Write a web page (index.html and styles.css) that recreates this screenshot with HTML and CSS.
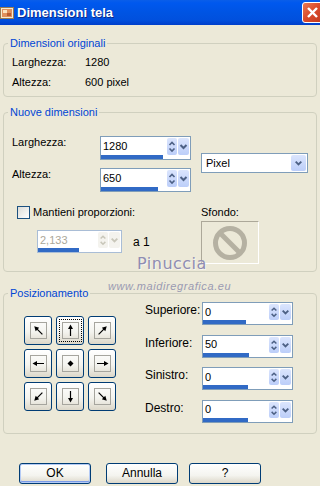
FILE: index.html
```html
<!DOCTYPE html>
<html lang="it">
<head>
    <meta charset="UTF-8">
    <meta name="viewport" content="width=device-width, initial-scale=1.0">
    <title>Dimensioni tela</title>
    <link rel="stylesheet" href="styles.css">
</head>

<body>
    <!-- simboli riutilizzati -->
    <svg class="simboli" width="0" height="0">
        <symbol id="su-giu" viewBox="0 0 10 17">
            <polyline points="2.5,7 5,4.5 7.5,7" fill="none" stroke="currentColor" stroke-width="1.6"/>
            <polyline points="2.5,10.5 5,13 7.5,10.5" fill="none" stroke="currentColor" stroke-width="1.6"/>
        </symbol>
        <symbol id="giu" viewBox="0 0 11 17">
            <polyline points="2.5,7 5.5,10 8.5,7" fill="none" stroke="currentColor" stroke-width="2"/>
        </symbol>
        <symbol id="freccia" viewBox="0 0 15 15">
            <line x1="7.5" y1="13" x2="7.5" y2="4.5" stroke="#000" stroke-width="1.2"/>
            <polygon points="7.5,1.5 5,6 10,6" fill="#000"/>
        </symbol>
    </svg>

    <div id="finestra">
        <!-- barra del titolo -->
        <div class="titolo">
            <svg class="icona" width="14" height="14" viewBox="0 0 14 14">
                <rect x="0.5" y="1.5" width="13" height="11" fill="#f6ead0" stroke="#9a7a50"/>
                <rect x="2" y="3" width="10" height="8" fill="#e0905c"/>
                <rect x="3" y="4" width="4" height="3" fill="#fbe3c0"/>
                <rect x="7" y="7" width="4" height="3" fill="#b85c30"/>
            </svg>
            <span class="titolo-testo">Dimensioni tela</span>
            <div class="chiudi">
                <svg width="19" height="19" viewBox="0 0 19 19">
                    <line x1="5" y1="5" x2="14" y2="14" stroke="#fff" stroke-width="2.4"/>
                    <line x1="14" y1="5" x2="5" y2="14" stroke="#fff" stroke-width="2.4"/>
                </svg>
            </div>
        </div>

        <div class="contenuto">
            <!-- dimensioni originali -->
            <fieldset class="gruppo gruppo-orig">
                <legend>Dimensioni originali</legend>
                <div class="info">
                    <span>Larghezza:</span><span>1280</span>
                    <span>Altezza:</span><span>600 pixel</span>
                </div>
            </fieldset>

            <!-- nuove dimensioni -->
            <fieldset class="gruppo gruppo-nuove">
                <legend>Nuove dimensioni</legend>
                <div class="nuove">
                    <div class="nuove-sx">
                        <div class="riga-dim">
                            <span class="etichetta">Larghezza:</span>
                            <div class="spin">
                                <div class="spin-riga">
                                    <span class="spin-valore">1280</span>
                                    <span class="spin-su-giu"><svg><use href="#su-giu"/></svg></span>
                                    <span class="spin-menu"><svg><use href="#giu"/></svg></span>
                                </div>
                                <div class="spin-barra"><div class="spin-pieno" style="width: 70%"></div></div>
                            </div>
                        </div>
                        <div class="riga-dim seconda">
                            <span class="etichetta">Altezza:</span>
                            <div class="spin">
                                <div class="spin-riga">
                                    <span class="spin-valore">650</span>
                                    <span class="spin-su-giu"><svg><use href="#su-giu"/></svg></span>
                                    <span class="spin-menu"><svg><use href="#giu"/></svg></span>
                                </div>
                                <div class="spin-barra"><div class="spin-pieno" style="width: 64%"></div></div>
                            </div>
                        </div>
                        <div class="riga-check">
                            <span class="casella"></span>
                            <span>Mantieni proporzioni:</span>
                        </div>
                        <div class="riga-rapporto">
                            <div class="spin bassa spento">
                                <div class="spin-riga">
                                    <span class="spin-valore">2,133</span>
                                    <span class="spin-su-giu"><svg><use href="#su-giu"/></svg></span>
                                    <span class="spin-menu"><svg><use href="#giu"/></svg></span>
                                </div>
                                <div class="spin-barra"><div class="spin-pieno" style="width: 49%"></div></div>
                            </div>
                            <span class="a-uno">a 1</span>
                        </div>
                    </div>

                    <div class="nuove-dx">
                        <div class="selezione">
                            <span class="selezione-testo">Pixel</span>
                            <span class="selezione-btn"><svg><use href="#giu"/></svg></span>
                        </div>
                        <div class="sfondo-label">Sfondo:</div>
                        <div class="sfondo">
                            <svg width="36" height="36" viewBox="0 0 36 36">
                                <circle cx="18" cy="18" r="14.5" fill="none" stroke="#b5b1a2" stroke-width="5"/>
                                <line x1="8" y1="8" x2="28" y2="28" stroke="#b5b1a2" stroke-width="5"/>
                            </svg>
                        </div>
                    </div>
                </div>
            </fieldset>

            <!-- posizionamento -->
            <fieldset class="gruppo gruppo-pos">
                <legend>Posizionamento</legend>
                <div class="pos">
                    <div class="pos-griglia">
                        <div class="pos-btn"><span class="quadro"><svg viewBox="0 0 15 15"><use href="#freccia" transform="rotate(-45 7.5 7.5)"/></svg></span></div>
                        <div class="pos-btn attivo"><span class="quadro"><svg viewBox="0 0 15 15"><use href="#freccia"/></svg></span></div>
                        <div class="pos-btn"><span class="quadro"><svg viewBox="0 0 15 15"><use href="#freccia" transform="rotate(45 7.5 7.5)"/></svg></span></div>
                        <div class="pos-btn"><span class="quadro"><svg viewBox="0 0 15 15"><use href="#freccia" transform="rotate(-90 7.5 7.5)"/></svg></span></div>
                        <div class="pos-btn"><span class="quadro"><svg viewBox="0 0 15 15"><polygon points="7.5,4.5 10.5,7.5 7.5,10.5 4.5,7.5" fill="#000"/></svg></span></div>
                        <div class="pos-btn"><span class="quadro"><svg viewBox="0 0 15 15"><use href="#freccia" transform="rotate(90 7.5 7.5)"/></svg></span></div>
                        <div class="pos-btn"><span class="quadro"><svg viewBox="0 0 15 15"><use href="#freccia" transform="rotate(-135 7.5 7.5)"/></svg></span></div>
                        <div class="pos-btn"><span class="quadro"><svg viewBox="0 0 15 15"><use href="#freccia" transform="rotate(180 7.5 7.5)"/></svg></span></div>
                        <div class="pos-btn"><span class="quadro"><svg viewBox="0 0 15 15"><use href="#freccia" transform="rotate(135 7.5 7.5)"/></svg></span></div>
                    </div>

                    <div class="margini">
                        <span class="etichetta-m">Superiore:</span>
                        <div class="spin bassa">
                            <div class="spin-riga">
                                <span class="spin-valore">0</span>
                                <span class="spin-su-giu"><svg><use href="#su-giu"/></svg></span>
                                <span class="spin-menu"><svg><use href="#giu"/></svg></span>
                            </div>
                            <div class="spin-barra"><div class="spin-pieno" style="width: 48%"></div></div>
                        </div>
                        <span class="etichetta-m">Inferiore:</span>
                        <div class="spin bassa">
                            <div class="spin-riga">
                                <span class="spin-valore">50</span>
                                <span class="spin-su-giu"><svg><use href="#su-giu"/></svg></span>
                                <span class="spin-menu"><svg><use href="#giu"/></svg></span>
                            </div>
                            <div class="spin-barra"><div class="spin-pieno" style="width: 52%"></div></div>
                        </div>
                        <span class="etichetta-m">Sinistro:</span>
                        <div class="spin bassa">
                            <div class="spin-riga">
                                <span class="spin-valore">0</span>
                                <span class="spin-su-giu"><svg><use href="#su-giu"/></svg></span>
                                <span class="spin-menu"><svg><use href="#giu"/></svg></span>
                            </div>
                            <div class="spin-barra"><div class="spin-pieno" style="width: 51%"></div></div>
                        </div>
                        <span class="etichetta-m">Destro:</span>
                        <div class="spin bassa">
                            <div class="spin-riga">
                                <span class="spin-valore">0</span>
                                <span class="spin-su-giu"><svg><use href="#su-giu"/></svg></span>
                                <span class="spin-menu"><svg><use href="#giu"/></svg></span>
                            </div>
                            <div class="spin-barra"><div class="spin-pieno" style="width: 51%"></div></div>
                        </div>
                    </div>
                </div>
            </fieldset>

            <!-- pulsanti -->
            <div class="pulsanti">
                <div class="pulsante predefinito">OK</div>
                <div class="pulsante annulla">Annulla</div>
                <div class="pulsante aiuto">?</div>
            </div>
        </div>

        <!-- filigrana -->
        <div class="filigrana">Pinuccia</div>
        <div class="filigrana-sito">www.maidiregrafica.eu</div>
    </div>
</body>
</html>
```

FILE: styles.css
```css
/* Stile finestra XP */
body {
    margin: 0;
    background-color: #ece9d8;
    font-family: "Liberation Sans", Arial, sans-serif;
    font-size: 11px;
    color: #000;
}

.simboli {
    position: absolute;
    width: 0;
    height: 0;
}

#finestra {
    position: relative;
    width: 320px;
    height: 486px;
    overflow: hidden;
    background-color: #ece9d8;
}

/* barra del titolo */
.titolo {
    height: 25px;
    display: flex;
    align-items: center;
    overflow: hidden;
    background: linear-gradient(#0a5ee9 0%, #0058ee 12%, #0054e3 50%, #0150dd 80%, #003fca 100%);
    color: #fff;
}

.icona {
    margin-left: 0;
    flex: none;
}

.titolo-testo {
    margin-left: 3px;
    font-weight: bold;
    font-size: 13px;
    text-shadow: 1px 1px 0 #0a2a8a;
}

.chiudi {
    margin-left: auto;
    margin-right: -3px;
    width: 21px;
    height: 21px;
    box-sizing: border-box;
    border: 1px solid #fff;
    border-radius: 3px;
    background: linear-gradient(135deg, #ea7a55 0%, #d9492a 50%, #c23a1d 100%);
    display: flex;
    align-items: center;
    justify-content: center;
}

.contenuto {
    padding: 0 3px;
}

/* gruppi */
.gruppo {
    margin: 0;
    padding: 0;
    min-width: 0;
    border: 1px solid #d0d0bf;
    border-radius: 4px;
}

.gruppo legend {
    margin-left: 4px;
    padding: 0 2px;
    line-height: 13px;
    color: #0046d5;
}

.gruppo-orig {
    margin-top: 12px;
}

.info {
    display: grid;
    grid-template-columns: 73px auto;
    grid-auto-rows: 20px;
    align-items: center;
    margin: 2px 0 4px 8px;
}

.gruppo-nuove {
    margin-top: 9px;
}

.nuove {
    display: flex;
}

.nuove-sx {
    width: 189px;
    padding: 17px 0 18px 8px;
}

.nuove-dx {
    padding-top: 34px;
}

.riga-dim {
    display: flex;
    align-items: flex-start;
}

.riga-dim.seconda {
    margin-top: 8px;
}

.etichetta {
    width: 88px;
    line-height: 13px;
}

/* campo numerico */
.spin {
    display: flex;
    flex-direction: column;
    width: 91px;
    height: 24px;
    box-sizing: border-box;
    border: 1px solid #7f9db9;
    background-color: #fff;
}

.spin.bassa {
    height: 23px;
}

.spin-riga {
    height: 18px;
    display: flex;
    overflow: hidden;
    box-sizing: border-box;
    padding: 1px 1px 0 0;
    color: #4d6185;
}

.spin.bassa .spin-riga {
    height: 17px;
}

.spin-valore {
    flex: 1;
    padding: 0 0 1px 2px;
    display: flex;
    align-items: center;
    color: #000;
}

.spin-su-giu,
.spin-menu {
    display: flex;
    border-radius: 2px;
    background: linear-gradient(#dbe5fd, #bccef9);
}

.spin-su-giu {
    width: 10px;
    margin-right: 1px;
}

.spin-menu {
    width: 11px;
}

.spin-su-giu svg,
.spin-menu svg {
    display: block;
    width: 100%;
    height: 100%;
}

.spin-barra {
    height: 4px;
}

.spin-pieno {
    height: 100%;
    background-color: #316ac5;
}

.spin.spento {
    width: 85px;
    border-color: #a9bdd6;
}

.spin.spento .spin-valore {
    color: #aca899;
}

.spin.spento .spin-riga {
    color: #c9c7ba;
}

.spin.spento .spin-su-giu,
.spin.spento .spin-menu {
    background: #f4f3ee;
}

.riga-check {
    margin-top: 14px;
    display: flex;
    align-items: center;
    line-height: 13px;
}

.casella {
    width: 13px;
    height: 13px;
    box-sizing: border-box;
    margin: 0 3px 0 5px;
    border: 1px solid #1c5180;
    background: linear-gradient(135deg, #dcdcd7, #fff);
}

.riga-rapporto {
    margin: 11px 0 0 25px;
    display: flex;
    align-items: center;
}

.a-uno {
    margin-left: 11px;
    font-size: 12px;
}

/* menu a tendina */
.selezione {
    width: 107px;
    height: 20px;
    box-sizing: border-box;
    border: 1px solid #7f9db9;
    background-color: #fff;
    display: flex;
    align-items: center;
    padding: 1px;
}

.selezione-testo {
    flex: 1;
    padding-left: 3px;
}

.selezione-btn {
    width: 15px;
    height: 16px;
    display: flex;
    color: #4d6185;
    border-radius: 2px;
    background: linear-gradient(#dbe5fd, #bccef9);
}

.selezione-btn svg {
    display: block;
    width: 15px;
    height: 16px;
}

.sfondo-label {
    margin-top: 33px;
    line-height: 13px;
}

.sfondo {
    margin-top: 2px;
    width: 58px;
    height: 43px;
    box-sizing: border-box;
    border: 1px solid;
    border-color: #aca899 #fff #fff #aca899;
    display: flex;
    align-items: center;
    justify-content: center;
}

/* posizionamento */
.gruppo-pos {
    margin-top: 15px;
}

.pos {
    display: flex;
}

.pos-griglia {
    display: grid;
    grid-template-columns: repeat(3, 28px);
    grid-template-rows: repeat(3, 29px);
    gap: 4px;
    margin: 16px 0 0 20px;
}

.pos-btn {
    box-sizing: border-box;
    border: 1px solid #003c74;
    border-radius: 3px;
    background: linear-gradient(#fff 0%, #f4f4ef 55%, #dcd7c9 100%);
    display: flex;
    align-items: center;
    justify-content: center;
}

.quadro {
    width: 17px;
    height: 17px;
    box-sizing: border-box;
    border: 1px solid #a6a59e;
    display: flex;
}

.quadro svg {
    display: block;
    width: 15px;
    height: 15px;
}

.pos-btn.attivo .quadro {
    outline: 1px dotted #000;
    outline-offset: 2px;
}

.margini {
    display: grid;
    grid-template-columns: 57px 91px;
    grid-auto-rows: 23px;
    row-gap: 9.5px;
    margin: 2px 0 10px 29px;
}

.etichetta-m {
    padding-top: 2px;
    line-height: 13px;
    font-size: 12px;
}

/* pulsanti in basso */
.pulsanti {
    display: flex;
    margin-top: 29px;
    padding-left: 16px;
}

.pulsante {
    width: 72px;
    height: 21px;
    box-sizing: border-box;
    border: 1px solid #003c74;
    border-radius: 3px;
    background: linear-gradient(#fff 0%, #f4f4ef 60%, #dcd7c9 100%);
    display: flex;
    align-items: center;
    justify-content: center;
    font-size: 12px;
}

.pulsante.predefinito {
    box-shadow: inset 0 0 0 1px #b5cbf5, inset 0 -1px 0 1px #7b9be8;
}

.annulla {
    margin-left: 15px;
}

.aiuto {
    margin-left: 11px;
}

/* filigrana sopra i gruppi */
.filigrana {
    position: absolute;
    left: 137px;
    top: 254px;
    font-family: "DejaVu Sans", sans-serif;
    font-size: 16px;
    letter-spacing: 0.5px;
    color: #8f8db2;
    text-shadow: 1px 1px 0 rgba(255, 255, 255, 0.6);
}

.filigrana-sito {
    position: absolute;
    left: 108px;
    top: 280px;
    font-style: italic;
    font-size: 11px;
    letter-spacing: 0.6px;
    color: #9a9ab2;
}
```
